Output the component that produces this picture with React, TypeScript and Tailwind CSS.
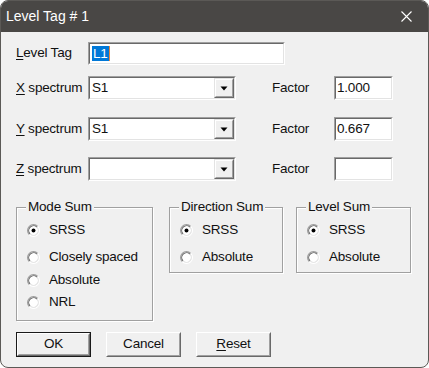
import React from "react";

// Classic Win32 style dialog: "Level Tag # 1"

function U({ children }: { children: React.ReactNode }) {
  return <span className="underline underline-offset-[2px] decoration-1">{children}</span>;
}

function Sunken({ className, children }: { className?: string; children?: React.ReactNode }) {
  return (
    <div
      className={`flex border border-t-[#a0a0a0] border-l-[#a0a0a0] border-b-white border-r-white ${className ?? ""}`}
    >
      <div className="flex flex-1 items-center border border-t-[#696969] border-l-[#696969] border-b-[#e3e3e3] border-r-[#e3e3e3] bg-white">
        {children}
      </div>
    </div>
  );
}

function Combo({ value }: { value: string }) {
  return (
    <Sunken className="w-[148px] h-[24px]">
      <span className="flex-1 pl-[2px] leading-none">{value}</span>
      <div className="flex h-full w-[20px] border border-t-[#e3e3e3] border-l-[#e3e3e3] border-b-[#696969] border-r-[#696969]">
        <div className="flex flex-1 items-center justify-center bg-[#f0f0f0] border border-t-white border-l-white border-b-[#a0a0a0] border-r-[#a0a0a0]">
          <svg width="8" height="5" viewBox="0 0 8 5">
            <path d="M0.5 0.5 H7.5 L4 4.5 Z" fill="#000" />
          </svg>
        </div>
      </div>
    </Sunken>
  );
}

function Radio({ checked, label }: { checked?: boolean; label: string }) {
  return (
    <div className="flex items-center h-[16px]">
      <svg width="13" height="13" viewBox="0 0 12 12" className="shrink-0">
        <circle cx="6" cy="6" r="4.3" fill="#fff" />
        <path d="M2.11 9.89 A5.5 5.5 0 0 1 9.89 2.11" fill="none" stroke="#a0a0a0" strokeWidth="1" />
        <path d="M9.89 2.11 A5.5 5.5 0 0 1 2.11 9.89" fill="none" stroke="#fff" strokeWidth="1" />
        <path d="M2.82 9.18 A4.5 4.5 0 0 1 9.18 2.82" fill="none" stroke="#696969" strokeWidth="1" />
        <path d="M9.18 2.82 A4.5 4.5 0 0 1 2.82 9.18" fill="none" stroke="#e3e3e3" strokeWidth="1" />
        {checked && <circle cx="6" cy="6" r="1.8" fill="#000" />}
      </svg>
      <span className="ml-[9px]">{label}</span>
    </div>
  );
}

function Group({
  title,
  className,
  children,
}: {
  title: string;
  className?: string;
  children: React.ReactNode;
}) {
  return (
    <div
      className={`flex flex-col border border-[#a0a0a0] shadow-[inset_1px_1px_0_#fff,1px_1px_0_#fff] ${className ?? ""}`}
    >
      <span className="-mt-[9px] ml-[9px] self-start h-[16px] px-[2px] bg-[#f0f0f0] leading-[16px]">
        {title}
      </span>
      <div className="flex flex-col pl-[10px]">{children}</div>
    </div>
  );
}

function Button({ children, isDefault }: { children: React.ReactNode; isDefault?: boolean }) {
  const face = (
    <div className="flex flex-1 border border-t-white border-l-white border-b-[#696969] border-r-[#696969]">
      <div className="flex flex-1 items-center justify-center bg-[#f0f0f0] border border-t-[#f0f0f0] border-l-[#f0f0f0] border-b-[#a0a0a0] border-r-[#a0a0a0]">
        {children}
      </div>
    </div>
  );
  return (
    <div className={`flex w-[75px] h-[25px] ${isDefault ? "border border-[#1a1a1a]" : ""}`}>{face}</div>
  );
}

function Row({ label, children, className }: { label: React.ReactNode; children: React.ReactNode; className?: string }) {
  return (
    <div className={`flex items-center ${className ?? ""}`}>
      <span className="w-[72px] whitespace-nowrap">{label}</span>
      {children}
    </div>
  );
}

function FactorRow({ letter, value, factor, className }: { letter: string; value: string; factor: string; className?: string }) {
  return (
    <Row
      className={className}
      label={
        <>
          <U>{letter}</U> spectrum
        </>
      }
    >
      <Combo value={value} />
      <span className="ml-[36px] w-[62px]">Factor</span>
      <Sunken className="w-[59px] h-[24px]">
        <span className="pl-[1px] leading-none">{factor}</span>
      </Sunken>
    </Row>
  );
}

export default function App() {
  return (
    <div className="w-[429px] h-[368px] bg-[#f0f0f0] rounded-[8px] border border-[#5b5956] overflow-hidden flex flex-col font-['Liberation_Sans',Arial,sans-serif] text-[13.5px] tracking-[-0.2px] text-[#111]">
      {/* title bar */}
      <div className="flex items-center justify-between h-[31px] bg-[#494745] pl-[5px] pr-[16px] text-white text-[14px] tracking-normal">
        <span>Level Tag # 1</span>
        <svg width="11" height="11" viewBox="0 0 11 11">
          <path d="M0.5 0.5 L10.5 10.5 M10.5 0.5 L0.5 10.5" stroke="#fff" strokeWidth="1.1" />
        </svg>
      </div>

      {/* body */}
      <div className="flex flex-col pl-[15px] pt-[10px]">
        <Row
          label={
            <>
              <U>L</U>evel Tag
            </>
          }
        >
          <Sunken className="w-[197px] h-[23px]">
            <span className="ml-[2px] flex items-center h-[15px] px-[1px] bg-[#0078d7] text-white leading-none">L1</span>
            <span className="w-[1px] h-[15px] bg-[#e8843c]" />
          </Sunken>
        </Row>

        <FactorRow className="mt-[11px]" letter="X" value="S1" factor="1.000" />
        <FactorRow className="mt-[17px]" letter="Y" value="S1" factor="0.667" />
        <FactorRow className="mt-[16px]" letter="Z" value="" factor="" />

        <div className="flex items-start mt-[26px]">
          <Group title="Mode Sum" className="w-[137px] h-[114px]">
            <div className="mt-[7px]">
              <Radio checked label="SRSS" />
            </div>
            <div className="mt-[11px]">
              <Radio label="Closely spaced" />
            </div>
            <div className="mt-[7px]">
              <Radio label="Absolute" />
            </div>
            <div className="mt-[6px]">
              <Radio label="NRL" />
            </div>
          </Group>
          <Group title="Direction Sum" className="ml-[16px] w-[114px] h-[66px]">
            <div className="mt-[7px]">
              <Radio checked label="SRSS" />
            </div>
            <div className="mt-[11px]">
              <Radio label="Absolute" />
            </div>
          </Group>
          <Group title="Level Sum" className="ml-[13px] w-[115px] h-[66px]">
            <div className="mt-[7px]">
              <Radio checked label="SRSS" />
            </div>
            <div className="mt-[11px]">
              <Radio label="Absolute" />
            </div>
          </Group>
        </div>

        <div className="flex gap-[15px] mt-[11px]">
          <Button isDefault>OK</Button>
          <Button>Cancel</Button>
          <Button>
            <span>
              <U>R</U>eset
            </span>
          </Button>
        </div>
      </div>
    </div>
  );
}
